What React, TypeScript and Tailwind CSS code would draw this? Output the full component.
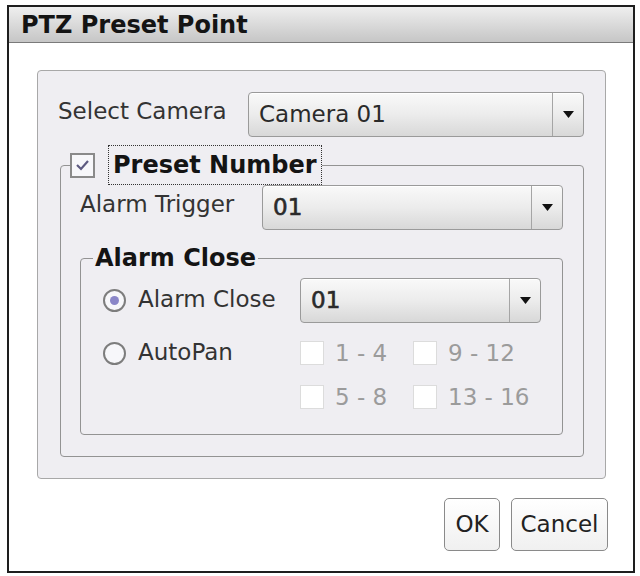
import React from "react";

const FONT = "font-['DejaVu_Sans',Verdana,sans-serif]";

interface DropdownProps {
  value: string;
  width: string;
  heavy?: boolean;
}

const Dropdown: React.FC<DropdownProps> = ({ value, width, heavy }) => (
  <div
    className={`flex h-[45px] ${width} overflow-hidden rounded-[4px] border border-[#9a9a9a] bg-gradient-to-b from-[#f9f9f9] via-[#ececec] to-[#d8d8d8] shadow-[inset_0_1px_0_#ffffff]`}
  >
    <div
      className={`flex flex-1 items-center pl-[10px] text-[23px] text-[#2a2a2a] ${
        heavy ? "[-webkit-text-stroke:0.6px_#2a2a2a]" : ""
      }`}
    >
      {value}
    </div>
    <div className="flex w-[31px] items-center justify-center border-l border-[#a5a5a5]">
      {/* caret */}
      <svg width="11" height="7" viewBox="0 0 11 7">
        <path d="M0 0 H11 L5.5 7 Z" fill="#111" />
      </svg>
    </div>
  </div>
);

const Radio: React.FC<{ checked?: boolean }> = ({ checked }) => (
  <span className="flex h-[23px] w-[23px] items-center justify-center rounded-full border-2 border-[#7d7d7d] bg-[#f7f7fa]">
    {checked && <span className="h-[9px] w-[9px] rounded-full bg-[#8a86c8]" />}
  </span>
);

const DisabledCheck: React.FC<{ label: string; width: string }> = ({ label, width }) => (
  <div className={`flex items-center gap-[11px] ${width}`}>
    <span className="h-[24px] w-[24px] border border-[#dcdcdc] bg-white" />
    <span className="text-[23px] text-[#9b9b9b]">{label}</span>
  </div>
);

export default function App() {
  return (
    <div className={`h-[576px] w-[640px] bg-white pl-[7px] pt-[5px] ${FONT}`}>
      <div className="flex h-[568px] w-[628px] flex-col border-2 border-[#1e1e1e] bg-white">
        {/* title bar */}
        <div className="flex h-[36px] items-center border-b border-[#7a7a7a] bg-gradient-to-b from-[#efefef] via-[#dadada] to-[#c6c6c6] pl-[12px]">
          <span className="text-[24px] font-bold leading-none text-[#141414]">PTZ Preset Point</span>
        </div>

        {/* main panel */}
        <div className="ml-[28px] mt-[27px] flex h-[409px] w-[569px] flex-col rounded-[4px] border border-[#a8a8a8] bg-[#efeef2] pl-[20px] pt-[21px]">
          <div className="flex items-center">
            <span className="w-[190px] pb-[6px] text-[23px] text-[#333]">Select Camera</span>
            <Dropdown value="Camera 01" width="w-[336px]" />
          </div>

          <fieldset className="ml-[2px] mt-[8px] h-[312px] w-[524px] rounded-[4px] border border-[#939393] pl-[19px]">
            <legend className="-ml-[10px] flex items-center">
              <span className="flex h-[25px] w-[25px] items-center justify-center border-2 border-[#8a8a8a] bg-[#f7f7fa]">
                <svg width="15" height="12" viewBox="0 0 15 12">
                  <path d="M2 6 L6 10 L13 2" stroke="#5d5a80" strokeWidth="2.2" fill="none" />
                </svg>
              </span>
              <span className="ml-[13px] border border-dotted border-[#333] px-[4px] py-[1px] text-[24px] font-bold text-[#141414]">
                Preset Number
              </span>
            </legend>

            <div className="flex items-center">
              <span className="w-[182px] pb-[6px] text-[23px] text-[#333]">Alarm Trigger</span>
              <Dropdown value="01" width="w-[301px]" heavy />
            </div>

            <fieldset className="mt-[14px] h-[191px] w-[483px] rounded-[4px] border border-[#939393] pl-[22px]">
              <legend className="-ml-[10px] px-[2px] text-[24px] font-bold leading-[29px] text-[#141414]">
                Alarm Close
              </legend>

              <div className="mt-[5px] flex items-center">
                <Radio checked />
                <span className="ml-[12px] w-[162px] pb-[3px] text-[23px] text-[#333]">Alarm Close</span>
                <Dropdown value="01" width="w-[241px]" heavy />
              </div>

              <div className="mt-[13px] flex items-start">
                <div className="flex h-[35px] w-[197px] items-center">
                  <Radio />
                  <span className="ml-[12px] pb-[3px] text-[23px] text-[#333]">AutoPan</span>
                </div>
                <div className="flex flex-col gap-[9px]">
                  <div className="flex">
                    <DisabledCheck label="1 - 4" width="w-[113px]" />
                    <DisabledCheck label="9 - 12" width="w-[130px]" />
                  </div>
                  <div className="flex">
                    <DisabledCheck label="5 - 8" width="w-[113px]" />
                    <DisabledCheck label="13 - 16" width="w-[130px]" />
                  </div>
                </div>
              </div>
            </fieldset>
          </fieldset>
        </div>

        {/* buttons */}
        <div className="mr-[25px] mt-[19px] flex justify-end gap-[11px]">
          <button className="h-[53px] w-[56px] rounded-[5px] border border-[#8a8a8a] bg-gradient-to-b from-white to-[#f0f0f0] text-[23px] text-[#222]">
            OK
          </button>
          <button className="h-[53px] w-[97px] rounded-[5px] border border-[#8a8a8a] bg-gradient-to-b from-white to-[#f0f0f0] text-[23px] text-[#222]">
            Cancel
          </button>
        </div>
      </div>
    </div>
  );
}
